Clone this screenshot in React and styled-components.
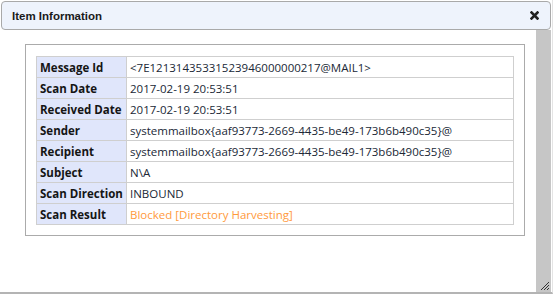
import React from 'react';
import styled, { createGlobalStyle } from 'styled-components';

const GlobalStyle = createGlobalStyle`
  html, body {
    margin: 0;
    padding: 0;
    background: #ffffff;
  }
`;

const Dialog = styled.div`
  width: 553px;
  height: 294px;
  box-sizing: border-box;
  display: flex;
  flex-direction: column;
  border-bottom: 2px solid #b4b4b4;
  border-right: 1px solid #e4e4e4;
  position: relative;
  background: #ffffff;
`;

const TitleBar = styled.div`
  margin: 1px 1px 0 1px;
  height: 29px;
  box-sizing: border-box;
  border: 1px solid #a9a9a9;
  border-radius: 4px;
  background: #eef3fc;
  display: flex;
  align-items: center;
  justify-content: space-between;
  padding: 0 11px 0 10px;
`;

const Title = styled.span`
  font-family: 'Liberation Sans', Arial, sans-serif;
  font-weight: bold;
  font-size: 11.5px;
  color: #1a1a1a;
`;

const CloseButton = styled.button`
  border: none;
  background: none;
  padding: 0;
  width: 9px;
  height: 9px;
  display: flex;
  cursor: pointer;
`;

const Body = styled.div`
  flex: 1;
  display: flex;
  min-height: 0;
`;

const Content = styled.div`
  flex: 1;
  padding: 14px 11px 0 25px;
`;

const ScrollTrack = styled.div`
  width: 15px;
  margin-right: 1px;
  background: #c6c6c6;
`;

const InfoBox = styled.div`
  border: 1px solid #ababab;
  padding: 11px 10px 10px 10px;
`;

const InfoTable = styled.table`
  width: 100%;
  border-collapse: collapse;
  font-family: 'Open Sans', 'Noto Sans', sans-serif;
  font-size: 11.5px;
`;

const Label = styled.th`
  width: 83px;
  height: 20px;
  padding: 0 3px;
  text-align: left;
  font-weight: bold;
  color: #151515;
  background: #e0e6fb;
  border: 1px solid #cfcfcf;
  white-space: nowrap;
`;

const Value = styled.td`
  height: 20px;
  padding: 0 3px;
  color: ${(props) => (props.warn ? '#ff9a3c' : '#202836')};
  border: 1px solid #cfcfcf;
  white-space: nowrap;
`;

const Grip = styled.svg`
  position: absolute;
  right: 2px;
  bottom: 1px;
`;

const rows = [
  { label: 'Message Id', value: '<7E12131435331523946000000217@MAIL1>' },
  { label: 'Scan Date', value: '2017-02-19 20:53:51' },
  { label: 'Received Date', value: '2017-02-19 20:53:51' },
  { label: 'Sender', value: 'systemmailbox{aaf93773-2669-4435-be49-173b6b490c35}@' },
  { label: 'Recipient', value: 'systemmailbox{aaf93773-2669-4435-be49-173b6b490c35}@' },
  { label: 'Subject', value: 'N\\A' },
  { label: 'Scan Direction', value: 'INBOUND' },
  { label: 'Scan Result', value: 'Blocked [Directory Harvesting]', warn: true },
];

const App = () => {
  return (
    <>
      <GlobalStyle />
      <Dialog>
        <TitleBar>
          <Title>Item Information</Title>
          <CloseButton aria-label="close">
            <svg width="9" height="9" viewBox="0 0 9 9">
              <path d="M1.5 1.5 L7.5 7.5 M7.5 1.5 L1.5 7.5" stroke="#222" strokeWidth="2.6" strokeLinecap="square" />
            </svg>
          </CloseButton>
        </TitleBar>
        <Body>
          <Content>
            <InfoBox>
              <InfoTable>
                <tbody>
                  {rows.map((item, index) => (
                    <tr key={index}>
                      <Label>{item.label}</Label>
                      <Value warn={item.warn}>{item.value}</Value>
                    </tr>
                  ))}
                </tbody>
              </InfoTable>
            </InfoBox>
          </Content>
          <ScrollTrack />
        </Body>
        <Grip width="12" height="12" viewBox="0 0 12 12">
          <path d="M11 3 L3 11 M11 6 L6 11 M11 9 L9 11" stroke="#333" strokeWidth="1" />
        </Grip>
      </Dialog>
    </>
  );
};

export default App;
